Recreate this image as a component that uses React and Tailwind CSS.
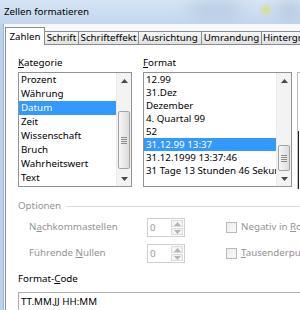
import React from "react";

const kategorien = ["Prozent", "Währung", "Datum", "Zeit", "Wissenschaft", "Bruch", "Wahrheitswert", "Text"];
const formate = [
  "12.99",
  "31.Dez",
  "Dezember",
  "4. Quartal 99",
  "52",
  "31.12.99 13:37",
  "31.12.1999 13:37:46",
  "31 Tage 13 Stunden 46 Sekunden",
];

const tabs = [
  { label: "Zahlen", w: "w-[40px]", active: true },
  { label: "Schrift", w: "w-[34px]" },
  { label: "Schrifteffekt", w: "w-[60px]" },
  { label: "Ausrichtung", w: "w-[63px]" },
  { label: "Umrandung", w: "w-[60px]" },
  { label: "Hintergrund", w: "w-[60px]" },
];

// mnemonic letter underlined, like the Windows dialog labels
const Mn = ({ pre = "", k, post = "" }) => (
  <span>
    {pre}
    <span className="underline underline-offset-[1px]">{k}</span>
    {post}
  </span>
);

const Arrow = ({ up, color = "#4a4a4a" }) => (
  <svg width="7" height="4" viewBox="0 0 7 4">
    {up ? <path d="M0 4 L3.5 0 L7 4 Z" fill={color} /> : <path d="M0 0 L3.5 4 L7 0 Z" fill={color} />}
  </svg>
);

const ScrollBar = ({ before, thumb }) => (
  <div className="w-[15px] shrink-0 flex flex-col bg-[#f3f3f3] border-l border-[#ececec]">
    <div className="h-[15px] flex items-center justify-center">
      <Arrow up />
    </div>
    <div className={before} />
    <div
      className={`${thumb} mx-[1px] rounded-[2px] border border-[#a3a3a3] bg-linear-to-r from-[#f6f6f6] to-[#dcdcdc] flex flex-col items-center justify-center gap-[1px]`}
    >
      <div className="w-[6px] h-px bg-[#8b8b8b]" />
      <div className="w-[6px] h-px bg-[#8b8b8b]" />
      <div className="w-[6px] h-px bg-[#8b8b8b]" />
      <div className="w-[6px] h-px bg-[#8b8b8b]" />
    </div>
    <div className="flex-1" />
    <div className="h-[15px] flex items-center justify-center">
      <Arrow />
    </div>
  </div>
);

const Spin = () => (
  <div className="w-[38px] h-[19px] shrink-0 border border-[#cfcfcf] flex bg-white">
    <div className="flex-1 pl-[2px] leading-[17px] text-[#9a9a9a]">0</div>
    <div className="w-[14px] flex flex-col gap-px p-px">
      <div className="flex-1 border border-[#dadada] bg-[#f4f4f4] flex items-center justify-center">
        <Arrow up color="#b5b5b5" />
      </div>
      <div className="flex-1 border border-[#dadada] bg-[#f4f4f4] flex items-center justify-center">
        <Arrow color="#b5b5b5" />
      </div>
    </div>
  </div>
);

const Check = () => (
  <div className="w-[11px] h-[11px] shrink-0 border border-[#b8b8b8] bg-linear-to-br from-[#ececec] to-[#fafafa]" />
);

export default function App() {
  return (
    <div className="w-[300px] h-[310px] overflow-hidden flex flex-col bg-[#f0f0f0] font-['Noto_Sans',sans-serif] text-[9.75px] text-black">
      {/* title bar */}
      <div className="h-[24px] shrink-0 relative overflow-hidden bg-linear-to-b from-[#d6e4f5] to-[#c3d7ee]">
        <div className="absolute left-[190px] top-[3px] w-[50px] h-[14px] rounded-full bg-[#b3c8e1] blur-sm" />
        <div className="absolute left-[262px] top-[6px] w-[8px] h-[8px] rounded-full bg-[#d9e07a] blur-[2px]" />
        <div className="absolute left-[280px] top-[4px] w-[20px] h-[12px] rounded-full bg-[#a6b9d0] blur-sm" />
        <div className="relative pl-[4px] pt-[5px] leading-[14px]">Zellen formatieren</div>
      </div>

      <div className="flex flex-1 min-h-0">
        {/* window frame */}
        <div className="w-[4px] shrink-0 bg-[#bcd2ec] border-r border-[#9db8d9]" />

        <div className="flex-1 flex flex-col pt-[3px] pl-px bg-[#f7f8f9]">
          {/* tabs */}
          <div className="flex items-end h-[17px] shrink-0">
            {tabs.map((t) =>
              t.active ? (
                <div
                  key={t.label}
                  className={`${t.w} shrink-0 h-[18px] -mb-px relative z-10 bg-white border-l border-t border-r border-[#898c95] flex items-center justify-center pt-px`}
                >
                  {t.label}
                </div>
              ) : (
                <div
                  key={t.label}
                  className={`${t.w} shrink-0 h-[13px] border-t border-r border-[#898c95] bg-linear-to-b from-[#f7f7f7] to-[#e1e1e1] flex items-center justify-center whitespace-nowrap overflow-hidden`}
                >
                  {t.label}
                </div>
              )
            )}
          </div>

          {/* tab page */}
          <div className="flex-1 bg-white border-l border-t border-[#898c95] pl-[12px]">
            <div className="flex mt-[11px]">
              <div className="w-[114px] shrink-0">
                <div className="h-[14px] leading-[14px]">
                  <Mn k="K" post="ategorie" />
                </div>
                <div className="mt-[2px] h-[115px] border border-[#8e9299] flex overflow-hidden">
                  <div className="flex-1 flex flex-col">
                    {kategorien.map((k) => (
                      <div
                        key={k}
                        className={`h-[14px] leading-[14px] pl-[2px] whitespace-nowrap ${
                          k === "Datum" ? "bg-[#3399ff] text-white" : ""
                        }`}
                      >
                        {k}
                      </div>
                    ))}
                  </div>
                  <ScrollBar before="h-[23px]" thumb="h-[58px]" />
                </div>
              </div>

              <div className="w-[149px] shrink-0 ml-[11px]">
                <div className="h-[14px] leading-[14px]">
                  <Mn k="F" post="ormat" />
                </div>
                <div className="mt-[2px] h-[115px] border border-[#8e9299] flex overflow-hidden">
                  <div className="flex-1 min-w-0 flex flex-col overflow-hidden">
                    {formate.map((f) => (
                      <div
                        key={f}
                        className={`h-[13px] leading-[13px] pl-[2px] whitespace-nowrap ${
                          f === "31.12.99 13:37" ? "bg-[#3399ff] text-white" : ""
                        }`}
                      >
                        {f}
                      </div>
                    ))}
                  </div>
                  <ScrollBar before="h-[57px]" thumb="h-[26px]" />
                </div>
              </div>

              {/* cut-off preview column */}
              <div className="ml-[5px] w-[20px] shrink-0">
                <div className="h-[14px]" />
                <div className="mt-[2px] h-[117px] border-l border-t border-[#b9bcc2] flex flex-col">
                  <div className="flex-1" />
                  <div className="h-[58px] border-l border-[#202020]" />
                </div>
              </div>
            </div>

            {/* Optionen */}
            <div className="mt-[10px] h-[14px] flex items-center text-[#939393]">
              <span className="leading-[14px]">Optionen</span>
              <div className="flex-1 h-px bg-[#dcdfe3] ml-[5px]" />
            </div>

            <div className="mt-[5px] h-[19px] flex items-center whitespace-nowrap">
              <div className="w-[129px] shrink-0 pl-[11px] text-[#939393]">
                <Mn pre="N" k="a" post="chkommastellen" />
              </div>
              <Spin />
              <div className="ml-[41px]">
                <Check />
              </div>
              <div className="ml-[4px] text-[#939393]">
                <Mn pre="Negativ in " k="R" post="ot" />
              </div>
            </div>

            <div className="mt-[7px] h-[19px] flex items-center whitespace-nowrap">
              <div className="w-[129px] shrink-0 pl-[11px] text-[#939393]">
                <Mn pre="Führende " k="N" post="ullen" />
              </div>
              <Spin />
              <div className="ml-[41px]">
                <Check />
              </div>
              <div className="ml-[4px] text-[#939393]">
                <Mn k="T" post="ausenderpunkt" />
              </div>
            </div>

            <div className="mt-[9px] h-[14px] leading-[14px]">
              <Mn pre="Format-" k="C" post="ode" />
            </div>
            <div className="mt-[6px] h-[19px] w-[300px] border border-[#abadb3] pl-[2px] leading-[17px]">
              TT.MM.JJ HH:MM
            </div>
          </div>
        </div>
      </div>
    </div>
  );
}
